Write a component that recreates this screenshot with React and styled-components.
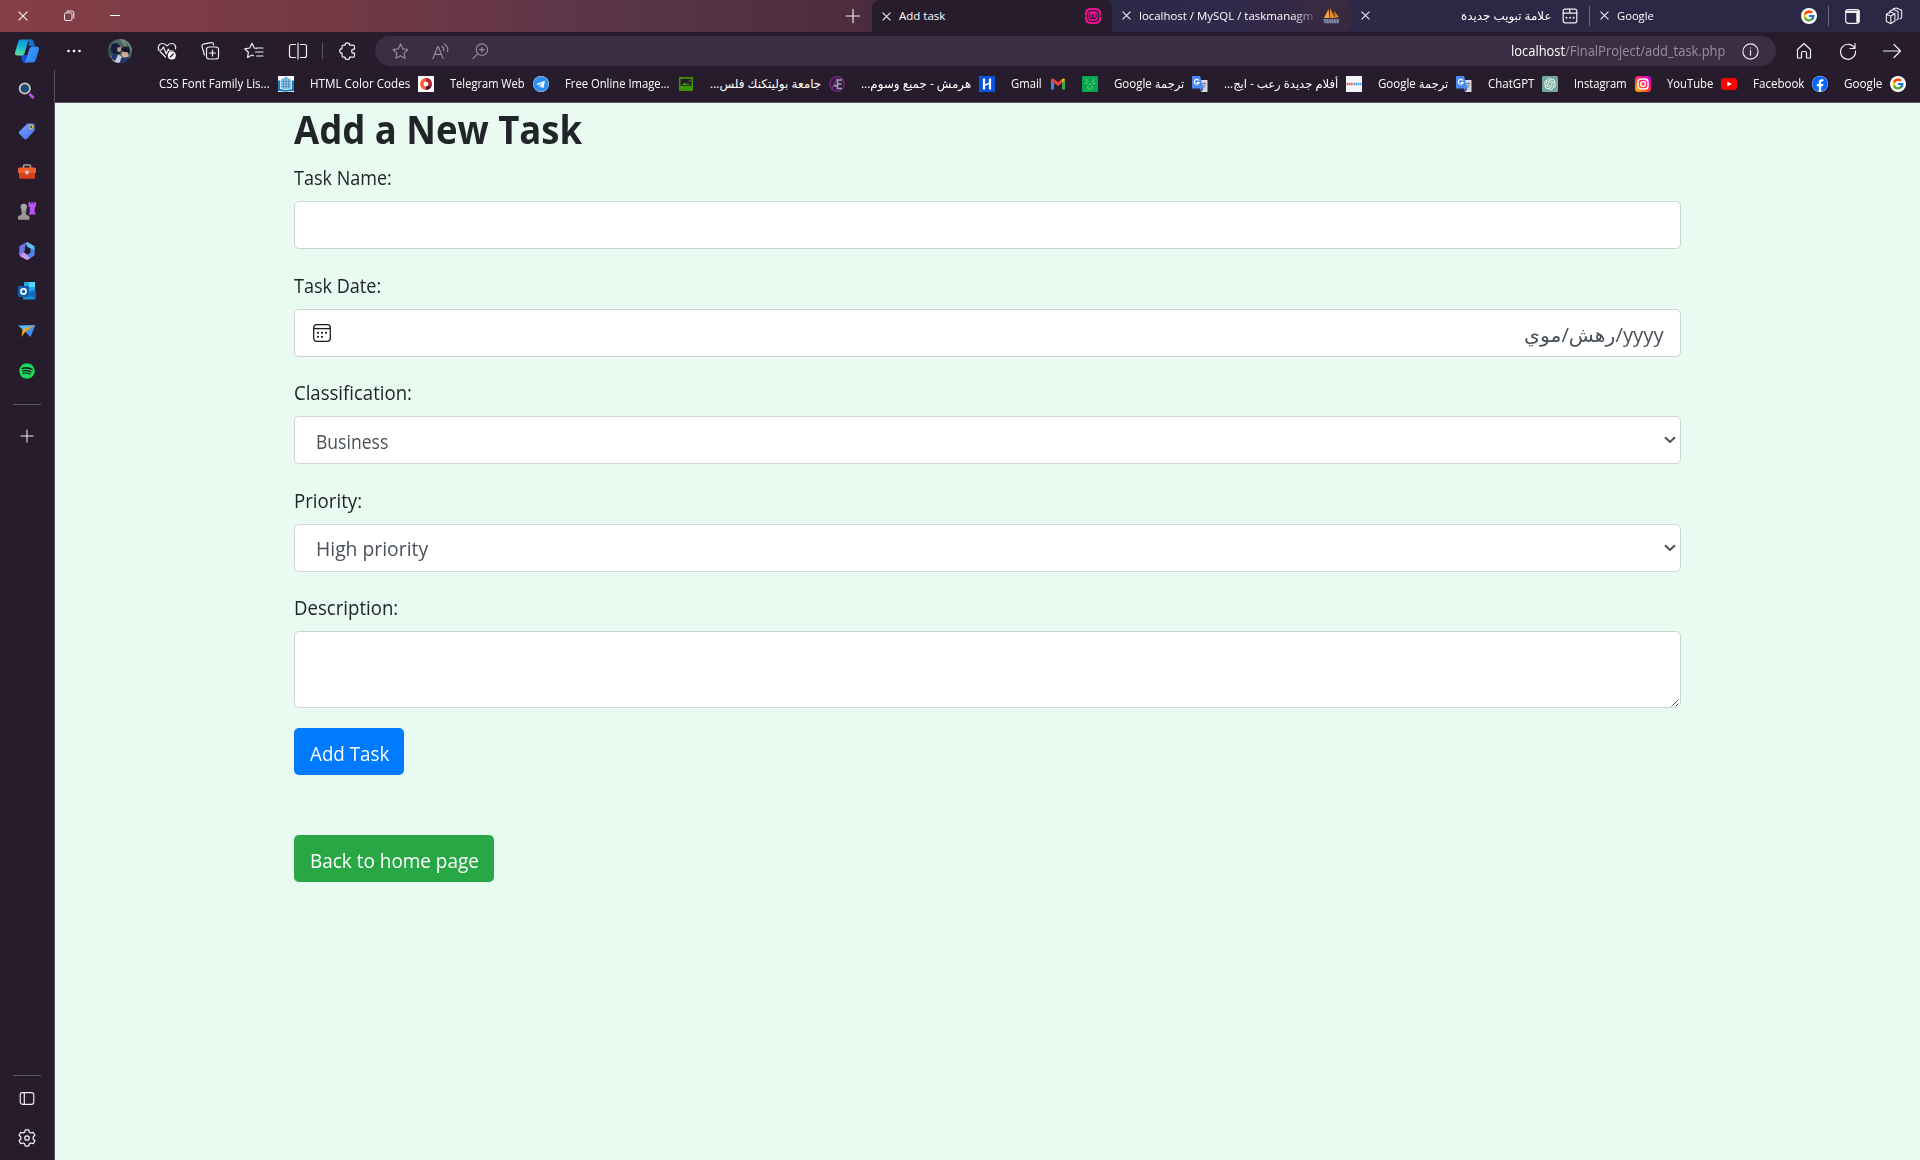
import React, { useLayoutEffect, useRef, useState } from "react";
import styled, { createGlobalStyle } from "styled-components";
import { FcGoogle } from "react-icons/fc";
import { FaFacebook, FaSpotify, FaTelegram } from "react-icons/fa";
import { RiOpenaiFill } from "react-icons/ri";

const CHROME = "#271c2b";

const Global = createGlobalStyle`
  * { box-sizing: border-box; }
  body { margin: 0; font-family: "Open Sans", "Noto Sans", "DejaVu Sans", sans-serif; }
  svg { display: block; flex: none; }
`;

/* ---------- text that fills a known measure ---------- */

const Measure = styled.span`
  display: block;
  flex: none;
  width: ${(p) => p.$w}px;
  white-space: nowrap;
  direction: ltr;
`;

const Inner = styled.span`
  display: inline-block;
  transform-origin: 0 50%;
  direction: ${(p) => (p.$rtl ? "rtl" : "ltr")};
`;

function Fit({ w, rtl, children }) {
  const ref = useRef(null);
  const [scale, setScale] = useState(1);
  useLayoutEffect(() => {
    setScale(w / ref.current.offsetWidth);
  }, [w]);
  return (
    <Measure $w={w}>
      <Inner ref={ref} $rtl={rtl} style={{ transform: `scaleX(${scale})` }}>
        {children}
      </Inner>
    </Measure>
  );
}

/* ---------- layout ---------- */

const Window = styled.div`
  display: flex;
  flex-direction: column;
  width: 1920px;
  height: 1160px;
  overflow: hidden;
  background: ${CHROME};
  color: #fff;
`;

const TitleBar = styled.div`
  display: flex;
  height: 32px;
  background: linear-gradient(90deg, #853f47 0%, #733945 18%, #5c3549 31%, #4b2c3d 45.4%, #2c2947 58%, #2b2846 100%);
`;

const WindowControls = styled.div`
  display: flex;
  width: 834px;
`;

const Slot = styled.div`
  display: flex;
  flex: none;
  align-items: center;
  justify-content: center;
  width: ${(p) => p.$w}px;
  height: ${(p) => (p.$h ? p.$h + "px" : "100%")};
`;

const Tab = styled.div`
  display: flex;
  align-items: center;
  flex: none;
  width: ${(p) => p.$w}px;
  height: ${(p) => (p.$active ? 32 : 31)}px;
  padding: 0 11px 0 10px;
  border-radius: ${(p) => (p.$active ? "7px 7px 0 0" : "0 7px 7px 0")};
  background: ${(p) => p.$bg || "transparent"};
  font-size: 11.5px;
  line-height: 16px;
`;

const TabLabel = styled.div`
  margin-left: 8px;
  ${(p) => p.$fade && "-webkit-mask-image: linear-gradient(90deg, #000 88%, rgba(0,0,0,.25) 100%);"}
`;

const Push = styled.div`
  flex: 1;
`;

const Bar = styled.div`
  flex: none;
  width: 1px;
  height: ${(p) => p.$h}px;
  background: ${(p) => p.$c || "#6d6880"};
`;

const Toolbar = styled.div`
  display: flex;
  align-items: center;
  height: 38px;
`;

const AddressBar = styled.div`
  display: flex;
  align-items: center;
  width: 1401px;
  height: 30px;
  padding-left: 5px;
  padding-right: 6px;
  border-radius: 15px;
  background: #3b2d43;
  font-size: 14px;
  line-height: 20px;
`;

const Url = styled.div`
  display: flex;
  margin-right: 5px;
`;

const Muted = styled.span`
  color: #96919a;
`;

const Body = styled.div`
  display: flex;
  flex: 1;
`;

const Sidebar = styled.aside`
  display: flex;
  flex-direction: column;
  align-items: center;
  width: 55px;
  padding-top: 1px;
  border-right: 1px solid #58505e;
`;

const SideCell = styled.div`
  display: flex;
  align-items: center;
  justify-content: center;
  width: 54px;
  height: 40px;
`;

const SideRule = styled.div`
  width: 28px;
  height: 1px;
  margin-top: ${(p) => p.$top}px;
  background: #5d5463;
`;

const Main = styled.div`
  display: flex;
  flex: 1;
  flex-direction: column;
`;

const Bookmarks = styled.div`
  display: flex;
  align-items: center;
  justify-content: flex-end;
  gap: 16px;
  height: 33px;
  padding: 0 14px 4px 0;
  border-bottom: 1px solid #58505e;
  font-size: 12px;
  line-height: 18px;
`;

const Bookmark = styled.div`
  display: flex;
  align-items: center;
  gap: 8px;
`;

const Page = styled.main`
  flex: 1;
  padding: 0 239px;
  background: #e9faf0;
  color: #212529;
`;

const Heading = styled.h1`
  height: 49px;
  margin: 1px 0 0;
  font-size: 39px;
  font-weight: 700;
  line-height: 49px;
`;

const Field = styled.div`
  display: flex;
  flex-direction: column;
  height: 107.5px;
`;

const FieldLabel = styled.label`
  flex: none;
  height: 48px;
  padding-top: 10px;
  font-size: 19.5px;
  line-height: 30px;
`;

const Control = styled.div`
  display: flex;
  flex: none;
  align-items: center;
  justify-content: space-between;
  height: ${(p) => p.$h || 48}px;
  padding: ${(p) => p.$pad || "0"};
  border: 1px solid #ced4da;
  border-radius: 5px;
  background: #fff;
  color: #495057;
  font-size: 19.5px;
  line-height: 30px;
`;

const Drop = styled.div`
  padding-top: ${(p) => p.$y || 3}px;
`;

const Button = styled.button`
  display: block;
  width: ${(p) => p.$w}px;
  height: 47px;
  margin: 0 0 ${(p) => p.$gap || 0}px;
  padding: 5px 0 0 16px;
  border: 0;
  border-radius: 5px;
  background: ${(p) => p.$bg};
  color: #fff;
  font-family: inherit;
  font-size: 19.5px;
  line-height: 30px;
  text-align: left;
`;

/* ---------- icons ---------- */

const Line = ({ s = 20, c = "#f0eef1", w = 1.2, children }) => (
  <svg width={s} height={s} viewBox="0 0 20 20" fill="none" stroke={c} strokeWidth={w} strokeLinecap="round" strokeLinejoin="round">
    {children}
  </svg>
);
const Pic = ({ s = 16, v = 16, children }) => (
  <svg width={s} height={s} viewBox={`0 0 ${v} ${v}`}>{children}</svg>
);

const Close = ({ s = 9 }) => (
  <svg width={s} height={s} viewBox="0 0 10 10" stroke="#f2f0f3" strokeWidth="1.2"><path d="M.6.6l8.8 8.8M9.4.6L.6 9.4" /></svg>
);
const Restore = () => (
  <svg width="12" height="12" viewBox="0 0 12 12" fill="none" stroke="#f2f0f3"><rect x="1.5" y="2.8" width="7.5" height="7.7" rx="1.5" /><path d="M3.5 1h5a2.2 2.2 0 0 1 2.3 2.2V8.5" /></svg>
);
const StarPath = "M10 2.2l2.3 5 5.5.7-4 3.8 1 5.4-4.8-2.7-4.8 2.7 1-5.4-4-3.8 5.5-.7z";

const Copilot = () => (
  <svg width="26" height="26" viewBox="0 0 26 26">
    <defs>
      <linearGradient id="cpA" x1=".4" y1="0" x2=".2" y2="1"><stop stopColor="#1493dc" /><stop offset=".45" stopColor="#18b9d8" /><stop offset="1" stopColor="#63e08c" /></linearGradient>
      <linearGradient id="cpB" x1="0" y1="0" x2="1" y2=".6"><stop stopColor="#3fa9fb" /><stop offset="1" stopColor="#2c7df5" /></linearGradient>
      <linearGradient id="cpC" x1="0" y1="0" x2="1" y2="0"><stop stopColor="#1c4fe0" /><stop offset="1" stopColor="#1a3fd0" /></linearGradient>
    </defs>
    <path d="M7 17h8l-2 7.500h-2.500c-1.600 0-2.300-1-2.700-2.500z" fill="url(#cpC)" />
    <path d="M15 1.500h2c1.700 0 2.400 1 2.900 2.600L20.800 8h-6z" fill="#1373cf" />
    <path d="M7.200 1.500h9c-1.400.3-1.900 1.500-2.300 3l-3.200 10.300c-.5 1.700-1.300 2.700-3 2.700H3.500c-2 0-3-1.300-2.400-3.300l3-10C4.600 2.500 5.500 1.500 7.200 1.500z" fill="url(#cpA)" />
    <path d="M18.800 24.500h-9c1.400-.3 1.900-1.500 2.300-3l3.200-10.300c.5-1.700 1.300-2.700 3-2.700h4.200c2 0 3 1.300 2.400 3.300l-3 10c-.5 1.700-1.400 2.700-3.100 2.700z" fill="url(#cpB)" />
  </svg>
);
const Avatar = () => (
  <svg width="24" height="24" viewBox="0 0 24 24">
    <clipPath id="av"><circle cx="12" cy="12" r="12" /></clipPath>
    <g clipPath="url(#av)">
      <path fill="#4d6763" d="M0 0h24v24H0z" /><path fill="#71887c" d="M12 0h7l5 9v3L16 7z" />
      <path fill="#35504f" d="M0 10l4-2 2 14H0zM17 3l5 5-1 3z" />
      <path fill="#171d3d" d="M3 7c2-4 7-4 9 0l2 4-3 5-6-1-2-4z" /><path fill="#bb9b8c" d="M9.500 8.500l3.500-.5 1 3-2.500 2-2.500-1z" />
      <path fill="#15182e" d="M13 10c3-4 8-3 9 1l-1 4-7-2z" /><path fill="#d0a893" d="M14 12.500l6 1 .5 3.500-3 2.500-4-2.500z" />
      <path fill="#c5cfe0" d="M3 17l8-1.500 4 4-4 4.500H6z" /><path fill="#23356a" d="M5 15l5 1-3 6-4-3zM13 19l8-1v6h-9z" />
    </g>
  </svg>
);
const Heart = () => (
  <Line>
    <path d="M8.500 16L3 10.500M1.500 8C.8 5 2.500 2.500 5.300 2.500 7.500 2.500 9 3.500 10 5c1-1.500 2.500-2.500 4.700-2.500 3 0 4.600 2.500 3.800 5.500M1 9h3.500l2-3 2.800 7 2-5 1 2h4" />
    <circle cx="14.800" cy="14.500" r="4" fill="#fff" stroke="none" /><path d="M13.300 16l3-3" stroke={CHROME} strokeWidth="1.300" />
  </Line>
);
const Collections = () => (
  <Line>
    <rect x="6.500" y="6" width="12" height="12" rx="2.500" /><path d="M12.500 9v6M9.500 12h6M4.500 14L2 5.500A2 2 0 0 1 3.300 3.200L11 1.600a2 2 0 0 1 2.400 1.500l.2.900" />
  </Line>
);
const FavList = () => (
  <Line><path d="M12.500 7.500L10.300 7 8 2.300 5.700 7l-5 .8 3.700 3.500-.9 5.200L8 14l1.500.8M12.500 7h6.500M11.500 11h7.500M12.500 15h6.500" /></Line>
);
const Split = () => (
  <Line><path d="M7.500 3.500H3.500a2 2 0 0 0-2 2v9a2 2 0 0 0 2 2h4M12.500 3.500h4a2 2 0 0 1 2 2v9a2 2 0 0 1-2 2h-4M10 2v16" /></Line>
);
const Puzzle = () => (
  <Line><path d="M7 4.200a2.300 2.300 0 0 1 4.600 0H15a1.500 1.500 0 0 1 1.500 1.500v2.500h-.8a2 2 0 0 0 0 4h.8v2.500A1.500 1.500 0 0 1 15 16.200h-3.400a2.300 2.300 0 0 1-4.600 0H5.500A1.500 1.500 0 0 1 4 14.700v-2.500a2.300 2.300 0 0 1 0-4.600V5.700a1.500 1.500 0 0 1 1.500-1.500z" /></Line>
);
const Home = () => (
  <Line><path d="M3.500 8.500L10 2.500l6.500 6V17h-4v-5a1.500 1.500 0 0 0-1.500-1.500H9A1.500 1.500 0 0 0 7.500 12v5h-4z" /></Line>
);
const Refresh = () => (
  <Line><path d="M16.800 7.500A7.500 7.500 0 1 0 17.500 10M17 2.500v5h-5" /></Line>
);
const GooglePlate = () => (
  <svg width="16" height="16" viewBox="0 0 16 16"><circle cx="8" cy="8" r="8" fill="#fff" /><g transform="translate(1.5 1.500)"><FcGoogle size={13} /></g></svg>
);
const Wamp = () => (
  <Pic><rect width="16" height="16" rx="5" fill="#f20d93" /><path d="M0 8h2M14 8h2" stroke={CHROME} strokeWidth="1.200" /><rect x="2.600" y="2.600" width="10.800" height="10.800" rx="3.500" fill="none" stroke={CHROME} strokeWidth="1.200" /><path d="M5 5.500v3.500q0 1.500 1.500 1.500T8 9V6v3q0 1.500 1.500 1.500T11 9V5.500" fill="none" stroke={CHROME} strokeWidth="1.300" /></Pic>
);
const PhpMyAdmin = () => (
  <Pic s={17} v={17}><path d="M1 11L5.500 2 6.500 11z" fill="#f5a63a" /><path d="M7 11V1l5 10z" fill="#f08c1e" /><path d="M12 11l-1-7 5 6z" fill="#d9822c" /><path d="M0 12h17l-1.500 4.500H1.500z" fill="#555b7c" /><path d="M1 13h15M1.500 15h14" stroke="#b9bdd0" strokeDasharray="1.500 1" /></Pic>
);
const NewTabIcon = () => (
  <Line s={16} w={1.5}><rect x="1.500" y="1.500" width="17" height="17" rx="2.500" /><path d="M1.500 6.500h17M9.500 1.500v3q0 2 2 2" /><path d="M5.500 12.200h.1M10 12.200h.1M14.500 12.200h.1" strokeWidth="2.300" /></Line>
);
const TabActions = () => (
  <Line s={17} w={1.4}><rect x="2" y="2" width="16" height="16" rx="3" /><path d="M2.500 3.500h15v2h-15zM14.500 6h3v11h-3z" fill="#fff" stroke="none" opacity="1" /><path d="M2.500 4.500h15" strokeWidth="2.500" /></Line>
);
const Workspaces = () => (
  <Line s={18} w={1.2}><path d="M1.500 8l5 2 4.500-2.500v8L6.500 18.500l-5-2.500zM6.500 10v8.500M1.500 8L6 5.500l5 2M5 4.800L9.500 2.800l5 2.200v8.500l-1.500.9M9 2L12.500 1l6 2.700v8.300l-1.800 1" /></Line>
);

const Book = () => (<Pic><path fill="#fff" d="M0 0h16v16H0z" /><path fill="#1b7cc0" d="M0 5l2-1v9l6 1 6-1V4l2 1v10l-8 .8L0 15z" /><path fill="#8fc6e8" d="M2.500 4L8 .5 13.500 4v8.500L8 13.500l-5.500-1z" /><path d="M8 1v12M5.500 3v9M10.500 3v9M3.500 5.500h9M3.500 8h9M3.500 10.500h9" stroke="#3f7da5" strokeWidth=".6" /></Pic>);
const ColorCodes = () => (<Pic><path fill="#fff" d="M0 0h16v16H0z" /><circle cx="8" cy="8" r="4.200" fill="none" stroke="#ff5a2c" strokeWidth="3.400" /><path d="M8 3.800a4.200 4.200 0 0 1 2.500 7.600" fill="none" stroke="#b8253a" strokeWidth="3.400" /><path d="M11.500 10.400A4.200 4.200 0 0 1 8 12.200" fill="none" stroke="#45143c" strokeWidth="3.400" /></Pic>);
const GreenImage = () => (<Pic><path fill="#3e9400" d="M1 1h14v14H1z" /><path fill={CHROME} d="M2.500 2.800h11v7h-11z" /><path fill="#3e9400" d="M4 9l2.500-2.500 2 1.500 1.500-.8L12 9zM11 4.300h1.500v1.500H11z" /></Pic>);
const AE = () => (<Pic><circle cx="8" cy="8" r="7.300" fill="#30203f" stroke="#7b258c" strokeWidth="1.200" /><path d="M2.800 13.300L8 2.500" stroke="#8d2a9d" strokeWidth="1.300" /><path d="M13 4H8.500v8.500H13M8.500 8H12.500M5 9.800h3" fill="none" stroke="#aaa4b2" strokeWidth="1.500" /></Pic>);
const Hermes = () => (<Pic><path fill="#0553df" d="M0 0h16v16H0z" /><path d="M5 2.500v11M11 2.500v11" stroke="#fff" strokeWidth="2.200" /><path d="M5 9.500l6-2.500" stroke="#fff" strokeWidth="1.800" /></Pic>);
const Gmail = () => (<Pic><path fill="#4285f4" d="M1 13.500V4.500l3 2.300v6.700z" /><path fill="#34a853" d="M12 13.500V6.800l3-2.300v9z" /><path fill="#ea4335" d="M1 4.500Q1 2 3.500 2.800L8 6.200l4.500-3.400L12 6.800 8 9.900 1 4.700z" /><path fill="#fbbc04" d="M12 6.800V3.200q3-1.700 3 1.300z" /></Pic>);
const GreenDeer = () => (<Pic><path fill="#04a74d" d="M0 0h16v16H0z" /><path d="M4 2.500l.5 2.500 2 1M12 2.500l-.5 2.500-2 1M2.500 7l3 1M13.500 7l-3 1M5 10l1.500 3L8 14l1.500-1L11 10M7 8.500h2M6.500 10.500h.6M9 10.500h.6" fill="none" stroke="#6fd07f" strokeWidth="1" /></Pic>);
const Translate = () => (<Pic><path fill="#d8dbe0" d="M6 4h9.500v12H9z" /><path d="M9 7.500h5M11.500 6.500v1M13.500 7.500c-.5 2-2 4-3.500 5M10.500 8.500c.5 1.500 2 3 3 3.500" stroke="#7b8793" fill="none" /><path fill="#4b8bf5" d="M0 0h8l3.500 12.500H0z" /><path fill="#2a56b8" d="M8 12.500h3.500L9.500 16z" /><path d="M6.800 4.500A2.400 2.400 0 1 0 7 6.500H4.800" fill="none" stroke="#fff" strokeWidth="1.200" /></Pic>);
const SiteStrip = () => (<Pic><path fill="#f4f5f8" d="M0 0h16v16H0z" /><path d="M.5 8h7" stroke="#f0635a" strokeWidth="2.600" strokeDasharray="1.600 .4" /><path d="M8 8h7.500" stroke="#5aa8e8" strokeWidth="2.600" strokeDasharray="1.600 .4" /></Pic>);
const ChatIcon = () => (<svg width="16" height="16" viewBox="0 0 16 16"><rect width="16" height="16" rx="1.500" fill="#74a99b" /><g transform="translate(1 1)"><RiOpenaiFill size={14} color="#fff" /></g></svg>);
const Insta = () => (
  <Pic><defs><linearGradient id="ig" x1="0" y1="1" x2="1" y2="0"><stop stopColor="#ffc400" /><stop offset=".35" stopColor="#ff5a1f" /><stop offset=".65" stopColor="#ff0f7b" /><stop offset="1" stopColor="#b800ff" /></linearGradient></defs><rect width="16" height="16" rx="3.500" fill="url(#ig)" /><rect x="3" y="3" width="10" height="10" rx="3" fill="none" stroke="#fff" strokeWidth="1.400" /><circle cx="8" cy="8" r="2.400" fill="none" stroke="#fff" strokeWidth="1.400" /><circle cx="11" cy="5" r=".8" fill="#fff" /></Pic>
);
const YouTube = () => (<Pic><rect y="2" width="16" height="12" rx="3" fill="#f00" /><path d="M6.300 5.500v5l4.500-2.500z" fill="#fff" /></Pic>);
const Disc = styled.span`
  display: flex;
  width: ${(p) => p.$s}px;
  height: ${(p) => p.$s}px;
  border-radius: 50%;
  background: ${(p) => p.$bg};
`;

const SearchIcon = () => (<Pic s={18} v={18}><path d="M11.500 12l4 4" stroke="#c24bf2" strokeWidth="3" /><circle cx="6.800" cy="6.500" r="5.200" fill="#1b4d78" stroke="#c9c6c5" strokeWidth="1.800" /></Pic>);
const TagIcon = () => (<Pic s={18} v={18}><defs><linearGradient id="tg" x1="0" y1="0" x2="1" y2="1"><stop stopColor="#77a5fb" /><stop offset="1" stopColor="#4a6bf0" /></linearGradient></defs><path d="M9.500 1.500H15A1.700 1.700 0 0 1 16.700 3v5.500L9 16.700a2 2 0 0 1-2.800 0L1.500 12a2 2 0 0 1 0-2.800z" fill="url(#tg)" /><circle cx="13" cy="5" r="1.700" fill="#4b4a55" stroke="#f5c51c" strokeWidth="1.100" /></Pic>);
const Toolbox = () => (<Pic s={18} v={18}><path d="M5.500 6V4Q5.500 3 6.500 3h5q1 0 1 1V6" fill="none" stroke="#aaa5a4" strokeWidth="1.500" /><rect x="0" y="5.500" width="18" height="6" rx="1.500" fill="#f1602b" /><path d="M1 11h16v4.500q0 1.200-1.200 1.200H2.200Q1 16.700 1 15.500z" fill="#d4411b" /><circle cx="9" cy="10.500" r="2" fill="#cfcac8" /></Pic>);
const Chess = () => (<Pic s={18} v={18}><path d="M10.500 0h1.600v1.500h1.300V0H15v1.500h1.300V0H18v4.500l-1.300 1V10l1.300 2.500h-7.500l1.300-2.500V5.500l-1.300-1z" fill="#b554f3" /><circle cx="5.800" cy="5" r="3.200" fill="#a9a7a6" /><path d="M3 8h5.600v1.500H7.500q0 3 2 4.500H2q2-1.500 2-4.500H3zM0 15q0-1.500 1.500-1.500h8.500q1.500 0 1.500 1.500v2.700H0z" fill="#9a9897" /></Pic>);
const M365 = () => (<Pic s={18} v={18}><path d="M9.500 0l7 4.300V9l-4-2.500L9 4.500 8 1z" fill="#55c3ee" /><path d="M9.500 0Q6.500 3 7 7.500L5 12.500l-3.700.5V5.300Q1.300 4.300 2.200 3.800L8 .4z" fill="#6f74e2" /><path d="M1.300 12.500V11L6 10.500 9 12.800l7 .2-6 4.500q-1 .6-2 0L2 14z" fill="#a878e0" /><path d="M16.600 6v6.500q0 1-.9 1.600l-4 2.400L9 12.800l3.500-2V6.500l3 1.500z" fill="#4d84e6" /><path d="M2 14l4-3.500L12 16.300l-2 1.200q-1 .6-2 0z" fill="#c79cf0" /></Pic>);
const Outlook = () => (<Pic s={18} v={18}><path d="M6 0h11v9H6z" fill="#28a8ea" /><path d="M11 0h6v5h-6z" fill="#50d9ff" /><path d="M5 8h12.500v8.500q0 1-1 1H5z" fill="#1490df" /><path d="M17.500 8v9l-8-5z" fill="#0f6cbd" /><rect y="4" width="11" height="11" rx="1.200" fill="#0f5fae" /><circle cx="5.500" cy="9.500" r="2.600" fill="none" stroke="#fff" strokeWidth="1.600" /></Pic>);
const Plane = () => (<Pic s={18} v={18}><path d="M7 9.500L17.500 3l-5 12z" fill="#3f8ff0" /><path d="M0 3.500L17.500 3 5 8z" fill="#55b5fb" /><path d="M4.500 7.500L17.500 3 7 10l-3.500 5z" fill="#f6a51c" /></Pic>);
const PanelIcon = () => (<Line s={18} w={1.3}><rect x="2.500" y="4" width="15" height="13" rx="2.500" /><path d="M7 4v13" /></Line>);
const Gear = () => (<Line s={20} w={1.3}><circle cx="10" cy="10" r="2.200" /><path d="M8.300 1.800h3.400l.6 2.300 1.600.9 2.300-.7 1.700 3-1.700 1.700v2l1.700 1.700-1.700 3-2.300-.7-1.600.9-.6 2.300H8.300l-.6-2.300-1.600-.9-2.300.7-1.700-3L3.800 11V9L2.100 7.300l1.700-3 2.300.7 1.600-.9z" /></Line>);
const Chevron = () => (<svg width="12" height="8" viewBox="0 0 12 8" fill="none" stroke="#495057" strokeWidth="2"><path d="M1 1.300l5 4.700 5-4.700" /></svg>);
const Calendar = () => (
  <svg width="18" height="18" viewBox="0 0 18 18" fill="none" stroke="#1a1a1a" strokeWidth="1.300"><rect x=".7" y=".7" width="16.600" height="16.600" rx="3" /><path d="M1 4.600h16" /><g fill="#1a1a1a" stroke="none"><circle cx="5" cy="8.800" r="1.100" /><circle cx="9" cy="8.800" r="1.100" /><circle cx="13" cy="8.800" r="1.100" /><circle cx="5" cy="12.800" r="1.100" /><circle cx="9" cy="12.800" r="1.100" /></g></svg>
);
const Grip = () => (<svg width="8" height="8" viewBox="0 0 8 8" stroke="#444" strokeWidth=".9"><path d="M.5 7.500l7-7M4.500 7.500l3-3" /></svg>);

/* ---------- content ---------- */

const bookmarks = [
  ["CSS Font Family Lis...", 111, <Book />],
  ["HTML Color Codes", 100, <ColorCodes />],
  ["Telegram Web", 75, <Disc $s={16} $bg="#fff"><FaTelegram size={16} color="#2f8fee" /></Disc>],
  ["Free Online Image...", 105, <GreenImage />],
  ["جامعة بوليتكنك فلس...", 111, <AE />, true],
  ["هرمش - جميع وسوم...", 110, <Hermes />, true],
  ["Gmail", 31, <Gmail />],
  [null, 0, <GreenDeer />],
  ["ترجمة Google", 70, <Translate />, true],
  ["أفلام جديدة رعب - ايج...", 114, <SiteStrip />, true],
  ["ترجمة Google", 70, <Translate />, true],
  ["ChatGPT", 46, <ChatIcon />],
  ["Instagram", 53, <Insta />],
  ["YouTube", 46, <YouTube />],
  ["Facebook", 51, <Disc $s={16} $bg="#fff"><FaFacebook size={16} color="#0866ff" /></Disc>],
  ["Google", 38, <GooglePlate />],
];

const sideApps = [
  <SearchIcon />, <TagIcon />, <Toolbox />, <Chess />, <M365 />, <Outlook />, <Plane />,
  <Disc $s={16} $bg="#121212"><FaSpotify size={16} color="#1ed760" /></Disc>,
];

export default function App() {
  return (
    <Window>
      <Global />
      <TitleBar>
        <WindowControls>
          <Slot $w={46}><Close s={10} /></Slot>
          <Slot $w={46}><Restore /></Slot>
          <Slot $w={46}><svg width="10" height="2"><path d="M0 .500h10" stroke="#fff" /></svg></Slot>
        </WindowControls>
        <Slot $w={38}><Line s={16} w={1.4}><path d="M10 1.500v17M1.500 10h17" /></Line></Slot>
        <Tab $w={240} $bg={CHROME} $active>
          <Close /><TabLabel><Fit w={46}>Add task</Fit></TabLabel><Push /><Wamp />
        </Tab>
        <Tab $w={239} $bg="linear-gradient(90deg, #2c2948, #30294a 50%, #3a2a40)">
          <Close /><TabLabel $fade><Fit w={174}>localhost / MySQL / taskmanagm</Fit></TabLabel><Push /><PhpMyAdmin />
        </Tab>
        <Tab $w={238}>
          <Close /><Push /><Fit w={91} rtl>علامة تبويب جديدة</Fit><Slot $w={10} /><NewTabIcon />
        </Tab>
        <Slot $w={1}><Bar $h={20} /></Slot>
        <Tab $w={238}>
          <Close /><TabLabel><Fit w={37}>Google</Fit></TabLabel><Push /><GooglePlate />
        </Tab>
        <Slot $w={1}><Bar $h={20} /></Slot>
        <Slot $w={46}><TabActions /></Slot>
        <Slot $w={38}><Workspaces /></Slot>
      </TitleBar>

      <Toolbar>
        <Slot $w={54}><Copilot /></Slot>
        <Slot $w={40}><Line><g fill="#fff" stroke="none"><circle cx="4.500" cy="10" r="1.300" /><circle cx="10" cy="10" r="1.300" /><circle cx="15.500" cy="10" r="1.300" /></g></Line></Slot>
        <Slot $w={51}><Avatar /></Slot>
        <Slot $w={43}><Heart /></Slot>
        <Slot $w={44}><Collections /></Slot>
        <Slot $w={44}><FavList /></Slot>
        <Slot $w={43}><Split /></Slot>
        <Slot $w={7}><Bar $h={16} $c="#5d5463" /></Slot>
        <Slot $w={43}><Puzzle /></Slot>
        <Slot $w={6} />
        <AddressBar>
          <Slot $w={40}><Line s={19} c="#96919a"><path d={StarPath} /></Line></Slot>
          <Slot $w={40}><Line s={19} c="#96919a"><path d="M2 17.500L7 5h.8l5 12.500M4 13h7M11.500 4.500q2.500 1.500 2 5M14 2q4.500 3 3.500 8" /></Line></Slot>
          <Slot $w={40}><Line s={19} c="#96919a"><circle cx="11.500" cy="8" r="6" /><path d="M7 12.500L2 17.500M11.500 5.500v5M9 8h5" /></Line></Slot>
          <Push />
          <Url><Fit w={214}>localhost<Muted>/FinalProject/add_task.php</Muted></Fit></Url>
          <Slot $w={40}><Line s={19}><circle cx="10" cy="10" r="8" /><path d="M10 9v5M10 6.200v.2" /></Line></Slot>
        </AddressBar>
        <Slot $w={6} />
        <Slot $w={44}><Home /></Slot>
        <Slot $w={44}><Refresh /></Slot>
        <Slot $w={44}><Line><path d="M1.500 10h17M12 3.500l6.500 6.500-6.500 6.500" /></Line></Slot>
      </Toolbar>

      <Body>
        <Sidebar>
          {sideApps.map((icon, i) => <SideCell key={i}>{icon}</SideCell>)}
          <SideRule $top={13} />
          <Slot $w={54} $h={62}><Line s={16} w={1.3}><path d="M10 2.500v15M2.500 10h15" /></Line></Slot>
          <Push />
          <SideRule $top={0} />
          <Slot $w={54} $h={43}><PanelIcon /></Slot>
          <Slot $w={54} $h={38}><Gear /></Slot>
          <Slot $w={54} $h={3} />
        </Sidebar>
        <Main>
          <Bookmarks>
            {bookmarks.map(([text, w, icon, rtl], i) => (
              <Bookmark key={i}>
                {text && <Fit w={w} rtl={rtl}>{text}</Fit>}
                {icon}
              </Bookmark>
            ))}
          </Bookmarks>
          <Page>
            <Heading><Fit w={288}>Add a New Task</Fit></Heading>
            <Field>
              <FieldLabel><Fit w={98}>Task Name:</Fit></FieldLabel>
              <Control />
            </Field>
            <Field>
              <FieldLabel><Fit w={87}>Task Date:</Fit></FieldLabel>
              <Control $pad="0 16px 0 18px">
                <Calendar />
                <Drop $y={5}><Fit w={140} rtl>yyyy/رهش/موي</Fit></Drop>
              </Control>
            </Field>
            <Field>
              <FieldLabel><Fit w={118}>Classification:</Fit></FieldLabel>
              <Control $pad="0 4px 0 21px"><Drop><Fit w={72}>Business</Fit></Drop><Chevron /></Control>
            </Field>
            <Field>
              <FieldLabel><Fit w={68}>Priority:</Fit></FieldLabel>
              <Control $pad="0 4px 0 21px"><Drop><Fit w={112}>High priority</Fit></Drop><Chevron /></Control>
            </Field>
            <Field>
              <FieldLabel><Fit w={104}>Description:</Fit></FieldLabel>
              <Control $h={77} $pad="66px 1px 0 0"><span /><Grip /></Control>
            </Field>
            <Slot $w={1} $h={37} />
            <Button $w={110} $bg="#007bff" $gap={60}><Fit w={79}>Add Task</Fit></Button>
            <Button $w={200} $bg="#28a745"><Fit w={169}>Back to home page</Fit></Button>
          </Page>
        </Main>
      </Body>
    </Window>
  );
}
